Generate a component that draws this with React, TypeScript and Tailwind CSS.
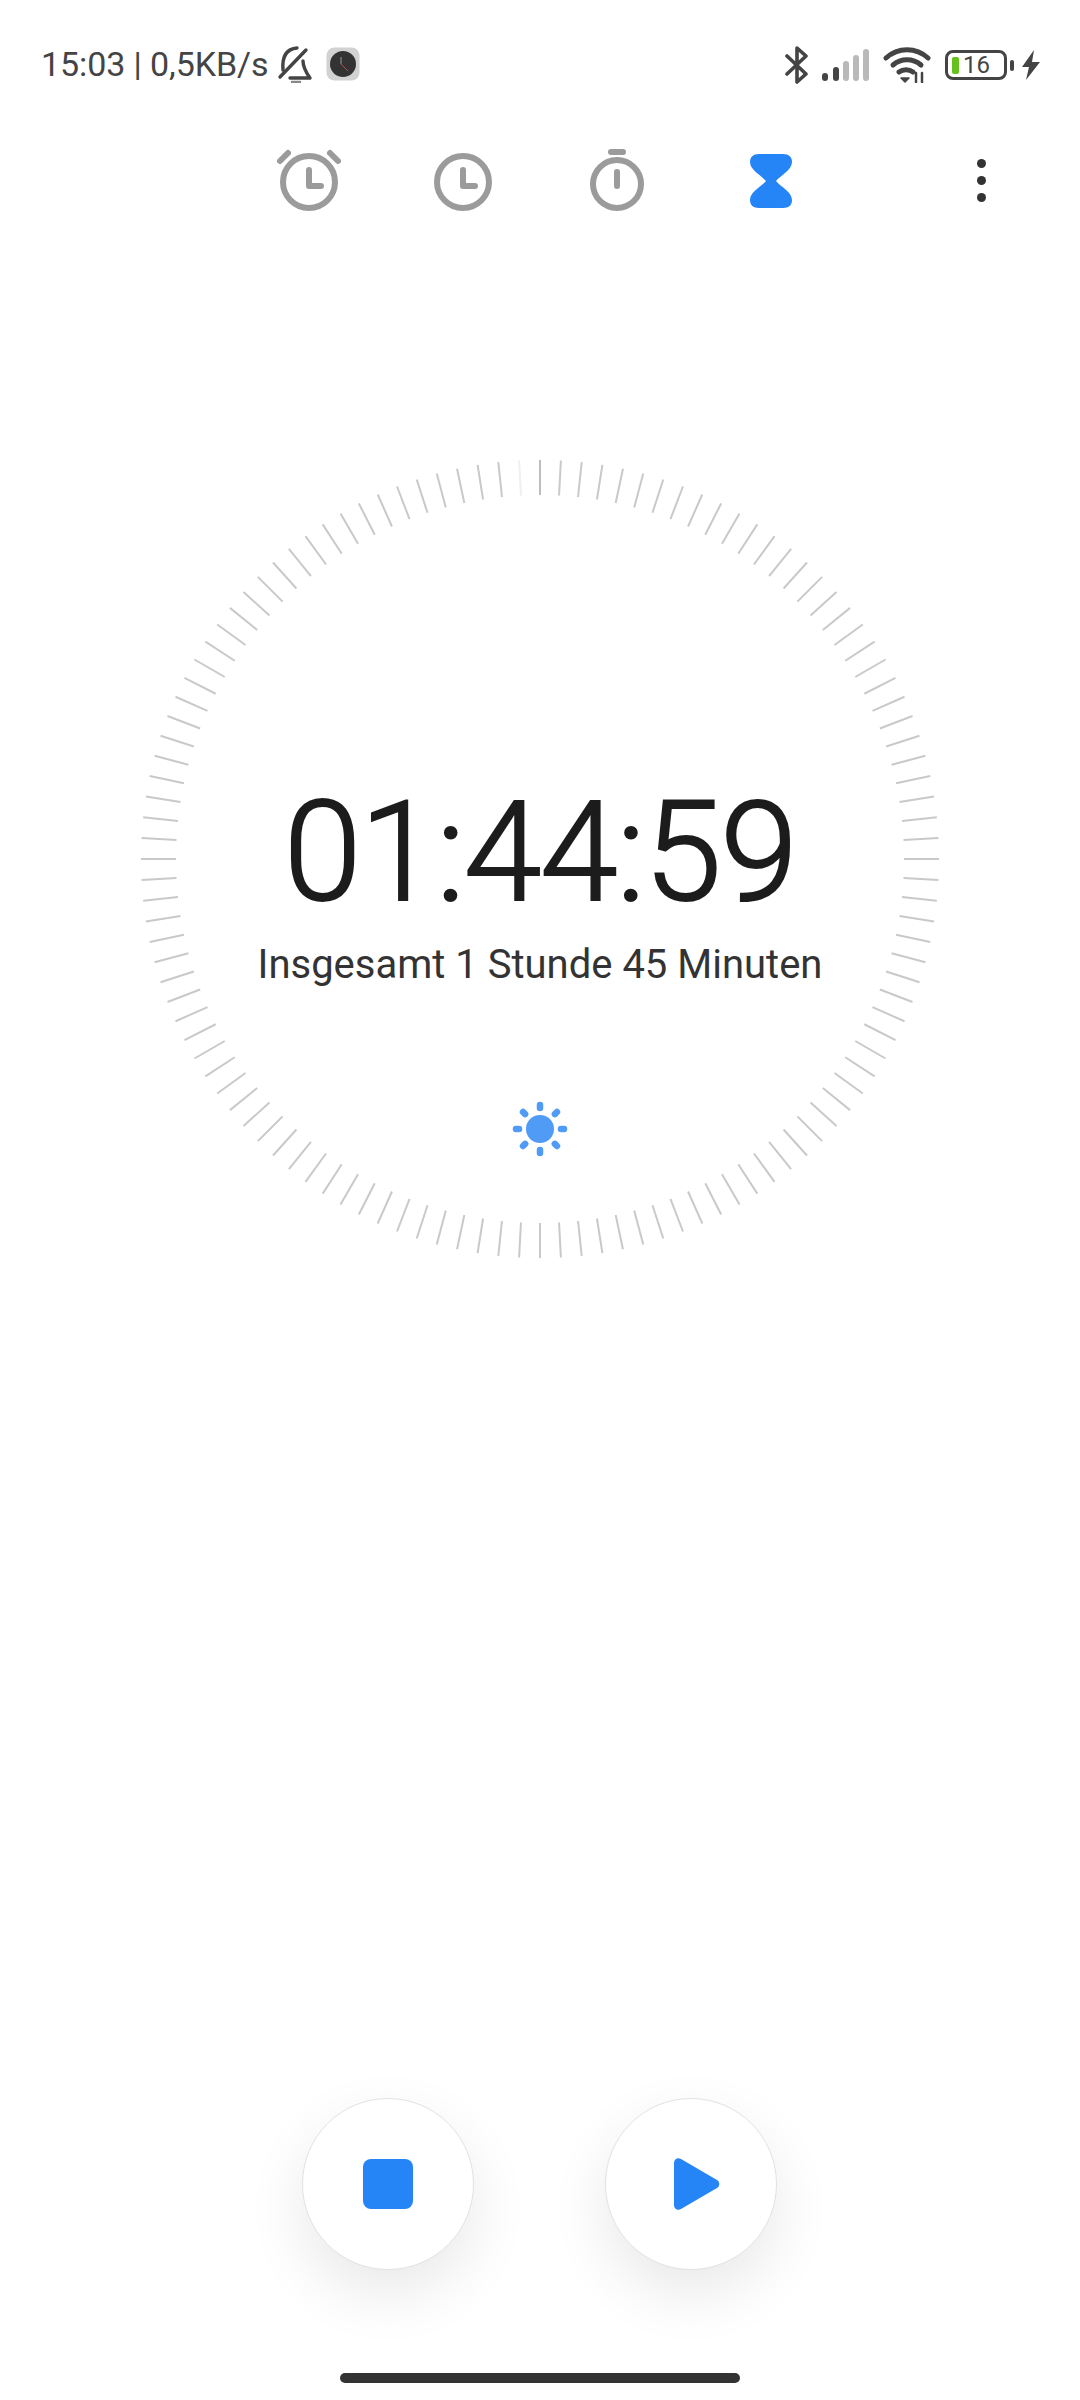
import React from 'react';

const GRAY = '#9b9b9b';
const BLUE = '#2585f6';

const BellOff = () => (
  <svg width="38" height="38" viewBox="0 0 38 38" fill="none" stroke="#444" strokeWidth="3.4" strokeLinecap="round" strokeLinejoin="round">
    <path d="M8 25C7 13 10 4 22 3" />
    <path d="M5 32 31 5" />
    <path d="M28 16c0 6 2 10 7 17H15" />
    <path d="M17 37h8" stroke="#888" strokeWidth="2.5" />
  </svg>
);

const AppIcon = () => (
  <svg width="34" height="34" viewBox="0 0 34 34">
    <rect x="0.5" y="0.5" width="33" height="33" rx="8" fill="#d2d2d2" />
    <circle cx="17" cy="17" r="13" fill="#333" />
    <path d="M15 10v7" stroke="#777" strokeWidth="1.5" />
    <path d="M15 17l7 7" stroke="#b05050" strokeWidth="1" />
  </svg>
);

const Bluetooth = () => (
  <svg width="26" height="38" viewBox="0 0 26 38" fill="none" stroke="#444" strokeWidth="3.6" strokeLinejoin="round" strokeLinecap="round">
    <path d="M3 10l19 18-9 8V2l9 8L3 28" />
  </svg>
);

const Signal = () => (
  <svg width="48" height="32" viewBox="0 0 48 32">
    <rect x="0" y="24" width="6" height="8" rx="3" fill="#444" />
    <rect x="11" y="18" width="6" height="14" rx="3" fill="#444" />
    <rect x="21" y="12" width="6" height="20" rx="3" fill="#b9b9b9" />
    <rect x="31" y="6" width="6" height="26" rx="3" fill="#b9b9b9" />
    <rect x="41" y="0" width="6" height="32" rx="3" fill="#b9b9b9" />
  </svg>
);

const Wifi = () => (
  <svg width="48" height="36" viewBox="0 0 48 36" fill="none" stroke="#444" strokeWidth="5" strokeLinecap="round">
    <path d="M3 11C15 0 33 0 45 11" />
    <path d="M10 18c8-7 20-7 28 0" />
    <path d="M16 25c4-3 10-3 14 0" />
    <path d="M18 31h8l-4 4z" fill="#444" stroke="#444" strokeWidth="1.5" strokeLinejoin="round" />
    <path d="M33 26v9M39 26v9" strokeWidth="2.5" />
  </svg>
);

const Bolt = () => (
  <svg width="18" height="30" viewBox="0 0 18 30">
    <path d="M12 0 0 17h7l-3 13 14-18h-8z" fill="#444" />
  </svg>
);

const Battery = () => (
  <div className="flex items-center gap-[3px]">
    <div className="flex h-[30px] w-[62px] items-center rounded-[8px] border-[3px] border-[#444] pl-[4px]">
      <div className="h-[17px] w-[7px] rounded-[2px] bg-[#67c11d]" />
      <span className="ml-[4px] text-[24px] leading-none text-[#444]">16</span>
    </div>
    <div className="h-[11px] w-[4px] rounded-[2px] bg-[#444]" />
  </div>
);

const StatusBar = () => (
  <div className="flex h-[84px] items-end justify-between pl-[41px] pr-[40px]">
    <div className="flex items-center">
      <span className="text-[34px] leading-[40px] tracking-[-0.1px] text-[#444]">15:03 | 0,5KB/s</span>
      <div className="ml-[7px]"><BellOff /></div>
      <div className="ml-[13px]"><AppIcon /></div>
    </div>
    <div className="flex items-center">
      <Bluetooth />
      <div className="ml-[12px]"><Signal /></div>
      <div className="ml-[13px]"><Wifi /></div>
      <div className="ml-[14px]"><Battery /></div>
      <div className="ml-[8px]"><Bolt /></div>
    </div>
  </div>
);

const AlarmIcon = () => (
  <svg width="80" height="80" viewBox="0 0 80 80" fill="none" stroke={GRAY} strokeWidth="6" strokeLinecap="round" strokeLinejoin="round">
    <circle cx="40" cy="42" r="26" />
    <path d="M40 30v16h12" />
    <path d="M11 21l8-8M69 21l-8-8" />
  </svg>
);

const ClockIcon = () => (
  <svg width="80" height="80" viewBox="0 0 80 80" fill="none" stroke={GRAY} strokeWidth="6" strokeLinecap="round" strokeLinejoin="round">
    <circle cx="40" cy="42" r="26" />
    <path d="M40 30v16h12" />
  </svg>
);

const StopwatchIcon = () => (
  <svg width="80" height="80" viewBox="0 0 80 80" fill="none" stroke={GRAY} strokeWidth="6" strokeLinecap="round">
    <circle cx="40" cy="44" r="24" />
    <path d="M40 32v14" />
    <path d="M34 12h12" />
  </svg>
);

const HourglassIcon = () => (
  <svg width="80" height="80" viewBox="0 0 80 80">
    <path
      d="M28 14h24c6 0 9 3 9 8 0 8-11 13-16 19 5 6 16 11 16 19 0 5-3 8-9 8H28c-6 0-9-3-9-8 0-8 11-13 16-19-5-6-16-11-16-19 0-5 3-8 9-8z"
      fill={BLUE}
    />
  </svg>
);

const TabBar = () => (
  <div className="mt-[56px] flex h-[80px] items-center pl-[232px]">
    <div className="flex w-[154px] justify-center"><AlarmIcon /></div>
    <div className="flex w-[154px] justify-center"><ClockIcon /></div>
    <div className="flex w-[154px] justify-center"><StopwatchIcon /></div>
    <div className="flex w-[154px] justify-center"><HourglassIcon /></div>
    <div className="ml-[129px] flex flex-col gap-[8px]">
      <div className="h-[9px] w-[9px] rounded-full bg-[#333]" />
      <div className="h-[9px] w-[9px] rounded-full bg-[#333]" />
      <div className="h-[9px] w-[9px] rounded-full bg-[#333]" />
    </div>
  </div>
);

const DialTicks = () => (
  <svg width="800" height="800" viewBox="-400 -400 800 800" className="col-start-1 row-start-1">
    {Array.from({ length: 120 }).map((_, i) => {
      const color = i === 0 ? '#bdbdbd' : i === 119 ? '#efefef' : '#c9c9c9';
      return (
        <line key={i} x1="0" y1="-399" x2="0" y2="-364" stroke={color} strokeWidth="2" transform={`rotate(${i * 3})`} />
      );
    })}
  </svg>
);

const SunIcon = () => (
  <svg width="60" height="60" viewBox="-30 -30 60 60">
    <circle r="14" fill="#4f9bf5" />
    {[0, 45, 90, 135, 180, 225, 270, 315].map((a) => (
      <line key={a} x1="0" y1="-21" x2="0" y2="-24" stroke="#4f9bf5" strokeWidth="6.5" strokeLinecap="round" transform={`rotate(${a})`} />
    ))}
  </svg>
);

const Dial = () => (
  <div className="mx-auto mt-[239px] grid h-[800px] w-[800px]">
    <DialTicks />
    <div className="col-start-1 row-start-1 flex flex-col items-center pt-[311px]">
      <div className="text-[140px] font-light leading-[164px] tracking-[-1.5px] text-[#1c1c1c] [-webkit-text-stroke:2px_#1c1c1c]">01:44:59</div>
      <div className="mt-[8px] text-[40px] leading-[46px] text-[#333]">Insgesamt 1 Stunde 45 Minuten</div>
      <div className="mt-[111px]"><SunIcon /></div>
    </div>
  </div>
);

const RoundButton = ({ children }: { children: React.ReactNode }) => (
  <button className="flex h-[172px] w-[172px] items-center justify-center rounded-full border border-[#e2e2e2] bg-white shadow-[0_24px_60px_rgba(0,0,0,0.09)]">
    {children}
  </button>
);

export default function App() {
  return (
    <div className="flex h-[2400px] w-[1080px] flex-col overflow-hidden bg-white font-['Roboto',sans-serif]">
      <StatusBar />
      <TabBar />
      <Dial />
      <div className="mt-auto flex justify-center gap-[131px] pr-[2px]">
        <RoundButton>
          <div className="h-[50px] w-[50px] rounded-[8px] bg-[#2585f6]" />
        </RoundButton>
        <RoundButton>
          <svg width="50" height="56" viewBox="0 0 50 56" className="ml-[12px]">
            <path d="M2 7c0-4 4-6 7-4l36 21c3 2 3 6 0 8L9 53c-3 2-7 0-7-4z" fill={BLUE} />
          </svg>
        </RoundButton>
      </div>
      <div className="mx-auto mb-[17px] mt-[103px] h-[10px] w-[400px] rounded-full bg-[#333]" />
    </div>
  );
}
